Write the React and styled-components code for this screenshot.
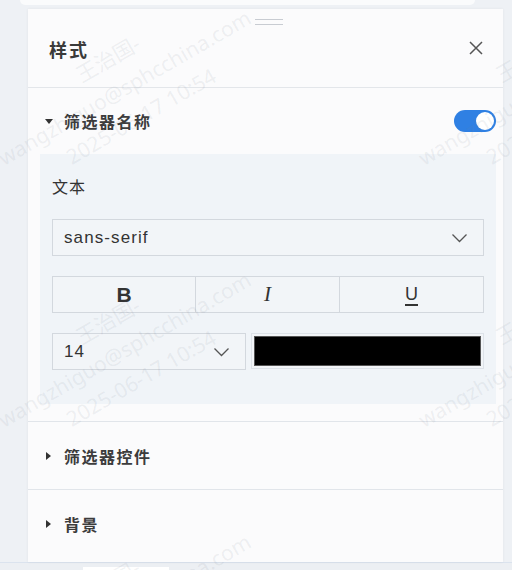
import React from "react";
import styled, { createGlobalStyle } from "styled-components";

const Global = createGlobalStyle`
  html, body { margin: 0; padding: 0; }
  body {
    background: #eef1f5;
    font-family: "Noto Sans CJK SC", "Noto Sans", sans-serif;
    color: #333;
  }
`;

const Page = styled.div`
  position: relative;
  width: 512px;
  height: 570px;
  overflow: hidden;
  background: #eef1f5;
  display: flex;
  flex-direction: column;
`;

const BackCard = styled.div`
  margin: 0 37px 0 20px;
  height: 5px;
  background: #fafbfc;
  border-radius: 0 0 6px 6px;
  flex: none;
`;

const Panel = styled.div`
  margin: 4px 9px 0 28px;
  height: 553px;
  background: #fbfbfc;
  box-shadow: 0 0 3px rgba(0, 0, 0, 0.06);
  display: flex;
  flex-direction: column;
  flex: none;
  position: relative;
`;

const Footer = styled.div`
  flex: 1;
  border-top: 1px solid #dbe3ee;
  background: #eceff3;
  display: flex;
  align-items: flex-end;
  padding-left: 83px;
`;

const FooterTab = styled.div`
  width: 86px;
  height: 3px;
  background: #fff;
`;

const Handle = styled.div`
  position: absolute;
  top: 10px;
  left: 227px;
  width: 28px;
  height: 4px;
  border-top: 1px solid #c8ccd2;
  border-bottom: 1px solid #c8ccd2;
`;

const Header = styled.div`
  height: 78px;
  display: flex;
  align-items: center;
  justify-content: space-between;
  padding: 0 18px 0 21px;
  border-bottom: 1px solid #e3e6ea;
  flex: none;
`;

const Title = styled.div`
  font-size: 18px;
  font-weight: 700;
  letter-spacing: 2px;
  color: #3a3a3a;
  padding-top: 2px;
`;

const CloseBtn = styled.div`
  width: 18px;
  height: 18px;
  display: flex;
  align-items: center;
  justify-content: center;
`;

const Section = styled.div`
  border-bottom: ${(p) => (p.last ? "none" : "1px solid #e1e5ea")};
  flex: none;
`;

const SectionHead = styled.div`
  height: ${(p) => p.h}px;
  display: flex;
  align-items: center;
  padding: 0 7px 0 17px;
`;

const Caret = styled.span`
  width: 0;
  height: 0;
  margin-right: 11px;
  ${(p) =>
    p.open
      ? `border-left: 4px solid transparent; border-right: 4px solid transparent; border-top: 5px solid #333;`
      : `border-top: 4px solid transparent; border-bottom: 4px solid transparent; border-left: 5px solid #333; margin-left: 1px; margin-right: 13px;`}
`;

const SectionTitle = styled.div`
  font-size: 16px;
  font-weight: 700;
  letter-spacing: 1.5px;
  color: #3c3c3c;
  flex: 1;
`;

const Toggle = styled.div`
  width: 42px;
  height: 22px;
  border-radius: 11px;
  background: #2f80e3;
  display: flex;
  align-items: center;
  justify-content: flex-end;
  padding: 0 2px;
  box-sizing: border-box;
`;

const Knob = styled.div`
  width: 18px;
  height: 18px;
  border-radius: 50%;
  background: #fff;
`;

const Body = styled.div`
  margin: 0 7px 17px 12px;
  background: #f0f4f8;
  padding: 16px 12px 34px 12px;
  display: flex;
  flex-direction: column;
`;

const Label = styled.div`
  font-size: 16px;
  letter-spacing: 1px;
  color: #333;
  height: 32px;
  display: flex;
  align-items: center;
  margin-bottom: 17px;
`;

const Select = styled.div`
  height: 37px;
  box-sizing: border-box;
  border: 1px solid #d3d8de;
  background: #f2f5f8;
  display: flex;
  align-items: center;
  justify-content: space-between;
  padding: 0 15px 0 11px;
  font-family: "Liberation Sans", Arial, sans-serif;
  font-size: 17px;
  letter-spacing: 1.1px;
  color: #333;
  width: ${(p) => p.w || "auto"};
  flex: none;
`;

const BtnGroup = styled.div`
  margin-top: 20px;
  height: 37px;
  box-sizing: border-box;
  border: 1px solid #d3d8de;
  display: grid;
  grid-template-columns: 142px 144px 1fr;
  background: #f2f5f8;
`;

const StyleBtn = styled.div`
  display: flex;
  align-items: center;
  justify-content: center;
  border-left: ${(p) => (p.first ? "none" : "1px solid #d3d8de")};
  font-size: ${(p) => p.size}px;
  color: #333;
  font-family: ${(p) => (p.serif ? '"Liberation Serif", serif' : '"Liberation Sans", Arial, sans-serif')};
  font-weight: ${(p) => (p.bold ? 700 : 400)};
  font-style: ${(p) => (p.italic ? "italic" : "normal")};
  text-decoration: ${(p) => (p.underline ? "underline" : "none")};
  text-decoration-thickness: 2px;
  text-underline-offset: 4px;
`;

const Row = styled.div`
  margin-top: 20px;
  display: flex;
  gap: 5px;
`;

const ColorBox = styled.div`
  flex: 1;
  height: 36px;
  box-sizing: border-box;
  border: 1px solid #dde2e8;
  padding: 2px;
  background: #f2f5f8;
`;

const Swatch = styled.div`
  height: 100%;
  background: ${(p) => p.c};
  border: 1px solid #555;
  box-sizing: border-box;
`;

const Watermark = styled.div`
  position: absolute;
  left: ${(p) => p.x}px;
  top: ${(p) => p.y}px;
  width: 300px;
  transform: rotate(-30deg);
  transform-origin: 0 0;
  font-family: "Noto Sans", "Noto Sans CJK SC", sans-serif;
  font-size: 21px;
  line-height: 33px;
  text-align: center;
  color: rgba(120, 130, 145, 0.11);
  white-space: nowrap;
  pointer-events: none;
`;

const Chevron = () => (
  <svg width="17" height="10" viewBox="0 0 17 10" fill="none">
    <path d="M1.5 1.5 L8.5 8.5 L15.5 1.5" stroke="#555" strokeWidth="1.3" />
  </svg>
);

const marks = [];
[0, 262, 524].forEach((dy) => {
  [0, 420].forEach((dx) => marks.push({ x: dx - 30, y: dy + 120 }));
});

export default function App() {
  return (
    <>
      <Global />
      <Page>
        <BackCard />
        <Panel>
          <Handle />
          <Header>
            <Title>样式</Title>
            <CloseBtn>
              <svg width="16" height="16" viewBox="0 0 16 16">
                <path d="M2 2 L14 14 M14 2 L2 14" stroke="#555" strokeWidth="1.5" />
              </svg>
            </CloseBtn>
          </Header>
          <Section>
            <SectionHead h={66}>
              <Caret open />
              <SectionTitle>筛选器名称</SectionTitle>
              <Toggle>
                <Knob />
              </Toggle>
            </SectionHead>
            <Body>
              <Label>文本</Label>
              <Select>
                <span>sans-serif</span>
                <Chevron />
              </Select>
              <BtnGroup>
                <StyleBtn first bold size={21}>B</StyleBtn>
                <StyleBtn serif italic size={21}>I</StyleBtn>
                <StyleBtn underline size={18}>U</StyleBtn>
              </BtnGroup>
              <Row>
                <Select w="194px">
                  <span>14</span>
                  <Chevron />
                </Select>
                <ColorBox>
                  <Swatch c="#000" />
                </ColorBox>
              </Row>
            </Body>
          </Section>
          <Section>
            <SectionHead h={67}>
              <Caret />
              <SectionTitle>筛选器控件</SectionTitle>
            </SectionHead>
          </Section>
          <Section last>
            <SectionHead h={67}>
              <Caret />
              <SectionTitle>背景</SectionTitle>
            </SectionHead>
          </Section>
        </Panel>
        <Footer>
          <FooterTab />
        </Footer>
        {marks.map((m, i) => (
          <Watermark key={i} x={m.x} y={m.y}>
            <div>王治国-</div>
            <div>wangzhiguo@sphcchina.com</div>
            <div>2025-06-17 10:54</div>
          </Watermark>
        ))}
      </Page>
    </>
  );
}
